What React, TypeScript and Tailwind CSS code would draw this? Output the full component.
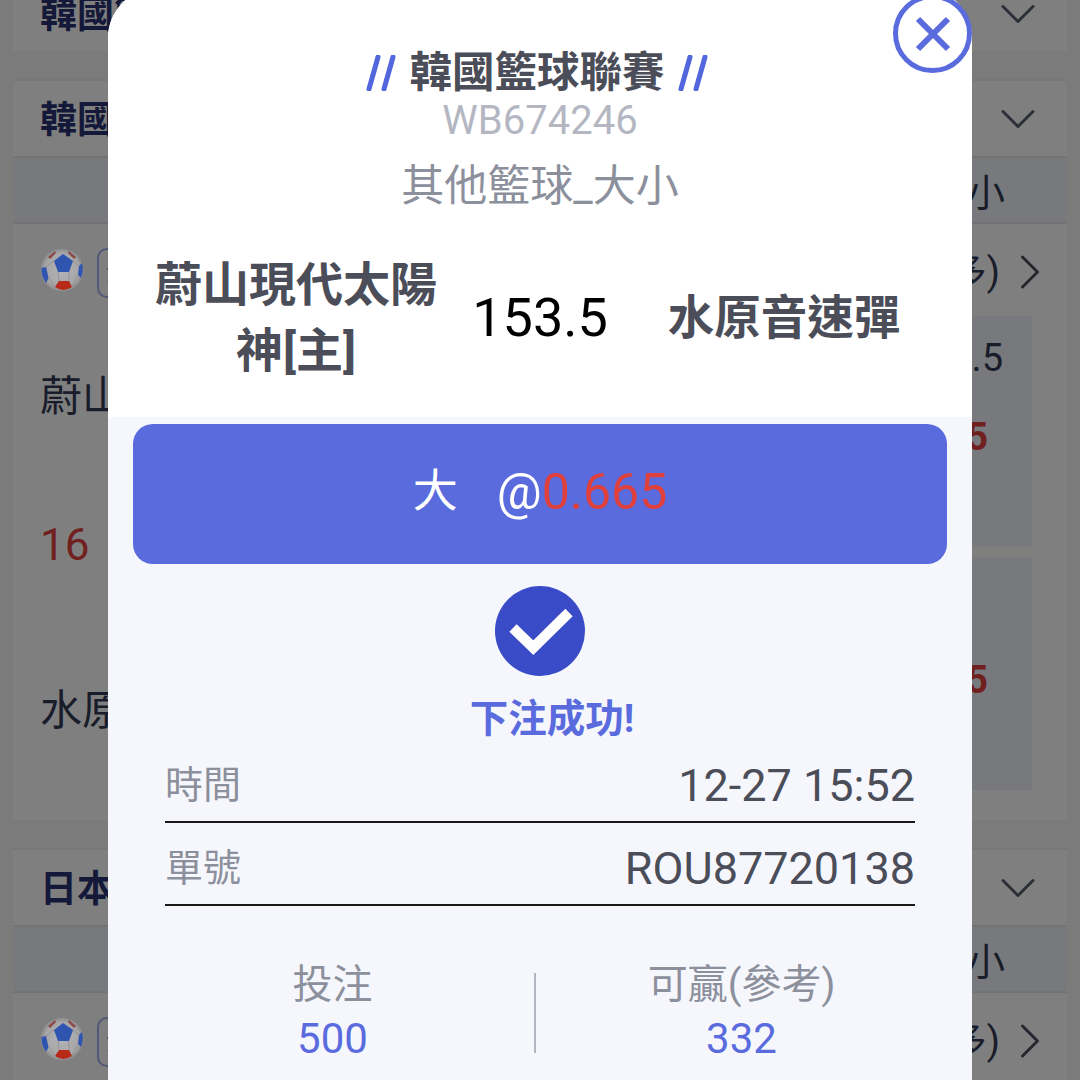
import React from 'react';
import { ChevronDown, ChevronRight } from 'lucide-react';

const FONT = "font-['Roboto','Noto_Sans_CJK_TC',sans-serif]";

// The ball stays brighter than the dim layer in the reference, so it sits above it
const Ball: React.FC = () => {
    const id = React.useId();
    return (
        <svg width="44" height="44" viewBox="0 0 44 44" className="relative z-10 shrink-0 blur-[0.4px]">
            <defs>
                <radialGradient id={id} cx="50%" cy="50%" r="50%">
                    <stop offset="0%" stopColor="#b4b4b6" />
                    <stop offset="80%" stopColor="#a6a6a8" />
                    <stop offset="100%" stopColor="#88888a" />
                </radialGradient>
            </defs>
            <circle cx="22" cy="22" r="21.5" fill={`url(#${id})`} />
            <path d="M23 6 L33 13 L29 24 L18 24 L14 13 Z" fill="#2f55b0" />
            <path d="M1.500 20 L6 19 L8.500 30 L6 35 Q1 28 1.500 20 Z" fill="#2f55b0" />
            <path d="M42 15 L39 18 L38 27 L41 30 Q44 23 42 15 Z" fill="#2f55b0" />
            <path d="M15 39 L19 33 L29 33 L32 39 Q23 45 15 39 Z" fill="#b82a18" />
            <path d="M8 9 L15 3 L16 5 L10 11 Z M36 9 L29 3 L28 5 L34 11 Z" fill="#8c4a48" />
            <path d="M18 24 L19 33 M29 24 L29 33 M14 13 L6 19 M33 13 L39 18 M9 30 L15 39 M38 27 L32 39" stroke="#8e8e92" strokeWidth="0.8" fill="none" />
        </svg>
    );
};

const LeagueHeader: React.FC<{ title: string }> = ({ title }) => (
    <div className="flex h-[77px] items-center justify-between border-t-2 border-[#eeeeee] bg-white pl-[27px] pr-[19px]">
        <span className="pt-[4px] text-[37px] font-bold text-[#2a3272]">{title}</span>
        <ChevronDown size={60} strokeWidth={1.2} className="text-[#5a5e70]" />
    </div>
);

const SubHeader: React.FC = () => (
    <div className="flex h-[68px] items-center justify-end border-y-2 border-[#e6e7ec] bg-[#f1f3f9] pr-[62px]">
        <span className="pt-[6px] text-[38px] text-[#333a55]">大小</span>
    </div>
);

const MatchHead: React.FC = () => (
    <div className="flex h-[92px] items-start justify-between pl-[27px] pr-[7px] pt-[24px]">
        <div className="flex items-start gap-[13px]">
            <Ball />
            <div className="flex h-[50px] w-[80px] items-center whitespace-nowrap rounded-[10px] border-2 border-[#a0b0f0] pl-[7px] text-[24px] text-[#3a4bc7]">滾球</div>
        </div>
        <div className="-mt-[6px] flex items-center text-[38px] text-[#333a55]">
            <span>(更多)</span>
            <ChevronRight size={60} strokeWidth={1.2} className="text-[#4a4e5e]" />
        </div>
    </div>
);

const OddsPanel: React.FC<{ top?: string; odds: string; h: string; drop: string }> = ({ top, odds, h, drop }) => (
    <div className={`flex w-[240px] flex-col items-end bg-[#f1f3f9] pr-[29px] pt-[20px] ${h}`}>
        <span className={`text-[38px] leading-[44px] text-[#333a55] ${drop}`}>{top}</span>
        <span className="mr-[15px] text-[38px] font-bold leading-[42px] text-[#e0403c]">{odds}</span>
    </div>
);

const StatCell: React.FC<{ label: string; value: string; width: string }> = ({ label, value, width }) => (
    <div className={`flex flex-col items-center ${width}`}>
        <span className="pt-[1px] text-[40px] leading-[44px] text-[#8c909c]">{label}</span>
        <span className="mt-[8px] text-[42px] leading-[48px] text-[#5a6bde]">{value}</span>
    </div>
);

const InfoRow: React.FC<{ label: string; value: string }> = ({ label, value }) => (
    <div className="flex h-[83px] items-center justify-between border-b-2 border-[#1a1a1a] pt-[10px]">
        <span className="text-[38px] text-[#8c909c]">{label}</span>
        <span className="text-[45px] text-[#4b4e59]">{value}</span>
    </div>
);

const Slashes: React.FC = () => (
    <svg width="30" height="36" viewBox="0 0 30 36">
        <path d="M12 2 L3 34 M27 2 L18 34" stroke="#5266de" strokeWidth="5" strokeLinecap="round" fill="none" />
    </svg>
);

export default function App() {
    return (
        <div className={`relative h-[1080px] w-[1080px] overflow-hidden bg-[#f6f6f6] ${FONT}`}>
            {/* List behind the dialog */}
            <div className="-mt-[26px] ml-[13px] w-[1054px]">
                <LeagueHeader title="韓國籃球聯賽" />
                <div className="h-[28px]" />
                <LeagueHeader title="韓國籃球聯賽" />
                <SubHeader />
                <div className="h-[596px] bg-white">
                    <MatchHead />
                    <div className="flex justify-between pr-[35px]">
                        <div className="flex flex-col pl-[27px] pt-[56px] text-[42px] text-[#333a55]">
                            <span className="leading-[50px]">蔚山現代太陽神</span>
                            <span className="mt-[98px] text-[44px] leading-[50px] text-[#e0403c]">16</span>
                            <span className="mt-[116px] leading-[50px]">水原音速彈</span>
                        </div>
                        <div className="flex flex-col gap-[10px]">
                            <OddsPanel top="153.5" odds="0.665" h="h-[231px]" drop="h-[80px]" />
                            <OddsPanel odds="1.155" h="h-[233px]" drop="h-[82px]" />
                        </div>
                    </div>
                </div>
                <div className="h-[28px]" />
                <LeagueHeader title="日本籃球聯賽" />
                <SubHeader />
                <div className="h-[200px] bg-white">
                    <MatchHead />
                </div>
            </div>

            <div className="absolute inset-0 bg-black/50" />

            {/* Bet confirmation dialog */}
            <div className="absolute left-[108px] top-[-12px] z-20 w-[864px] overflow-hidden rounded-t-[50px] bg-[#f6f7fd]">
                <div className="flex h-[429px] flex-col items-center bg-white">
                    <div className="-ml-[6px] mt-[60px] flex h-[50px] items-center gap-[13px]">
                        <Slashes />
                        <span className="text-[42.5px] font-bold leading-[50px] text-[#4b4e59]">韓國籃球聯賽</span>
                        <Slashes />
                    </div>
                    <span className="mt-[1px] text-[40px] leading-[44px] text-[#b4b7c2]">WB674246</span>
                    <span className="mt-[17px] text-[43px] leading-[52px] text-[#8c909c]">其他籃球_大小</span>
                    <div className="mt-[40px] flex w-full items-center">
                        <div className="w-[376px] px-[47px] text-center text-[47px] font-bold leading-[66px] text-[#4b4e59]">蔚山現代太陽神[主]</div>
                        <div className="flex w-[112px] shrink-0 justify-center whitespace-nowrap text-[54px] leading-[66px] text-black">153.5</div>
                        <div className="w-[376px] text-center text-[46.5px] font-bold leading-[66px] text-[#4b4e59]">水原音速彈</div>
                    </div>
                </div>
                <div className="mx-[25px] mt-[7px] flex h-[140px] items-center justify-center gap-[39px] rounded-[20px] bg-[#5a6bde] pb-[4px] text-white">
                    <span className="text-[45px]">大</span>
                    <span className="text-[50px]">@<span className="text-[#e0403c]">0.665</span></span>
                </div>
                <div className="mt-[22px] flex flex-col items-center">
                    <div className="flex h-[90px] w-[90px] items-center justify-center rounded-full bg-[#3a4bc7]">
                        <svg width="64" height="48" viewBox="0 0 64 48" fill="none" className="overflow-visible">
                            <path d="M5 21 L25.300 40.700 L61 5.500" stroke="#ffffff" strokeWidth="10.500" />
                        </svg>
                    </div>
                    <span className="ml-[24px] mt-[21px] h-[43px] text-[38.5px] font-bold leading-[44px] text-[#5a6bde]">下注成功!</span>
                </div>
                <div className="mx-[57px]">
                    <InfoRow label="時間" value="12-27 15:52" />
                    <InfoRow label="單號" value="ROU87720138" />
                </div>
                <div className="ml-[23px] mt-[56px] flex h-[120px] items-start">
                    <StatCell label="投注" value="500" width="w-[403px]" />
                    <div className="mt-[11px] h-[80px] w-[2px] bg-[#b4b7c2]" />
                    <StatCell label="可贏(參考)" value="332" width="w-[411px]" />
                </div>
            </div>

            {/* Close button, sits across the dialog edge */}
            <div className="absolute left-[893px] top-[-6px] z-30 flex h-[79px] w-[79px] items-center justify-center rounded-full border-[5px] border-[#5a6bde] bg-white">
                <svg width="36" height="36" viewBox="0 0 36 36">
                    <path d="M3 3 L33 33 M33 3 L3 33" stroke="#5a6bde" strokeWidth="6" fill="none" />
                </svg>
            </div>
        </div>
    );
}
